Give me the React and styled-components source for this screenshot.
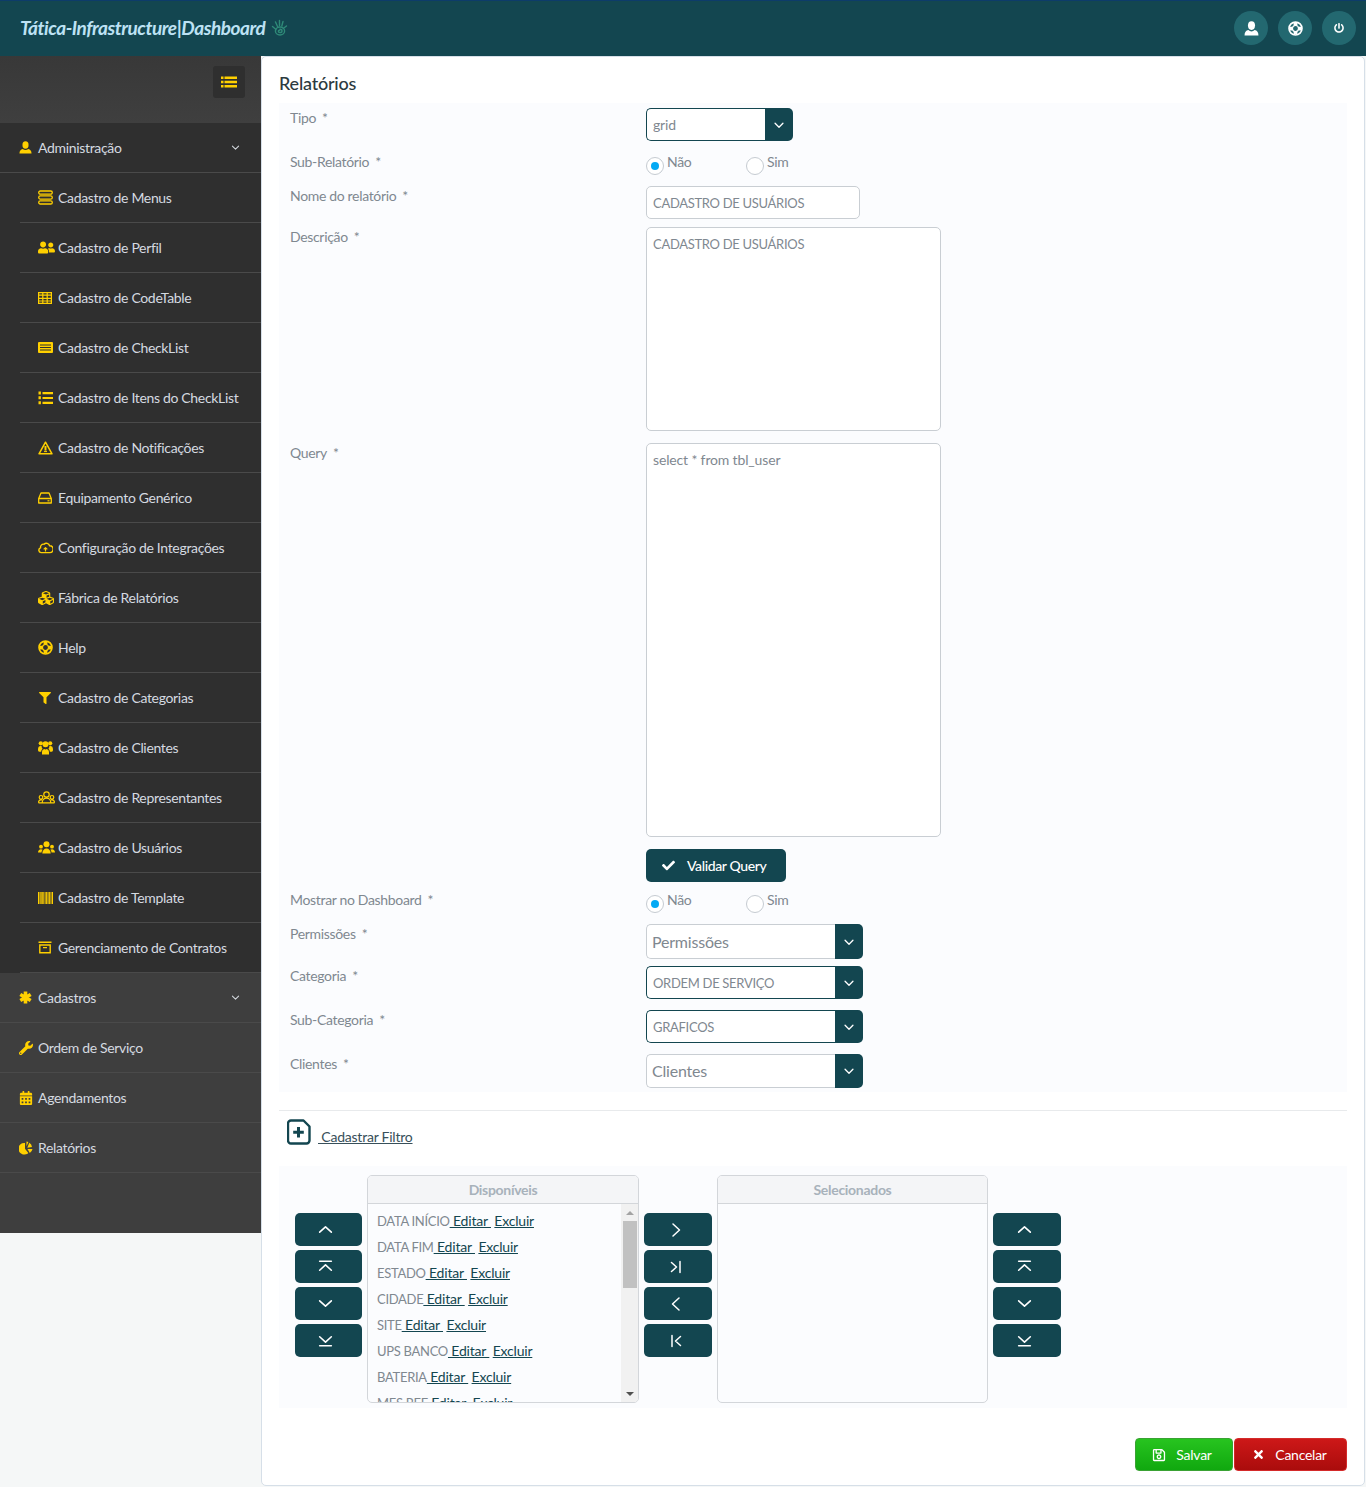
import React from 'react';
import styled, { createGlobalStyle } from 'styled-components';
import { FaUserFriends, FaCubes, FaFilter, FaWrench, FaCalendarAlt, FaPowerOff, FaCheck, FaTimes, FaRegSave } from 'react-icons/fa';

const TEAL = '#134650';
const FONT = '"Lato", "Liberation Sans", sans-serif';

const GlobalStyle = createGlobalStyle`
  html, body { margin: 0; padding: 0; background: #f5f7f7; }
  * { box-sizing: border-box; }
  body { font-family: ${FONT}; font-size: 14px; color: #7a858f; }
`;

const Page = styled.div`
  width: 1366px;
  height: 1487px;
  display: flex;
  flex-direction: column;
`;

const Header = styled.header`
  height: 56px;
  flex: none;
  background: ${TEAL};
  border-top: 1px solid #0d3c6a;
  display: flex;
  align-items: center;
  justify-content: space-between;
  padding: 0 10px 1px 20px;
`;

const Brand = styled.div`
  display: flex;
  align-items: center;
  gap: 6px;
  margin-top: -1px;
  color: #bde2f4;
  font-size: 19px;
  font-weight: 700;
  font-style: italic;
  letter-spacing: -0.45px;
`;

const HeaderActions = styled.div`
  display: flex;
  gap: 10px;
`;

const RoundButton = styled.button`
  width: 34px;
  height: 34px;
  border: 0;
  padding: 0;
  border-radius: 50%;
  background: #236870;
  color: #fff;
  display: flex;
  align-items: center;
  justify-content: center;
`;

const Body = styled.div`
  flex: 1;
  display: flex;
  align-items: stretch;
`;

const Sidebar = styled.aside`
  width: 261px;
  height: 1177px;
  flex: none;
  background: #3e3e3e;
`;

const ToggleBar = styled.div`
  height: 67px;
  padding: 10px 16px 0 0;
  display: flex;
  justify-content: flex-end;
  align-items: flex-start;
  background: linear-gradient(#383838, #3f3f3f);
`;

const ToggleButton = styled.button`
  width: 32px;
  height: 32px;
  padding: 0;
  border: 0;
  border-radius: 3px;
  background: #2f2f2f;
  color: #ffd000;
  display: flex;
  align-items: center;
  justify-content: center;
`;

const SubMenu = styled.div`
  background: #2f2f2f;
`;

const MenuRow = styled.div`
  height: 50px;
  display: flex;
  align-items: center;
  color: #d5dae0;
  font-size: 14px;
  letter-spacing: -0.33px;
  border-bottom: 1px solid #4a4a4a;
  padding: ${({ $sub }) => ($sub ? '0 0 0 18px' : '0 20px 0 19px')};
  margin-left: ${({ $sub }) => ($sub ? '20px' : '0')};
`;

const MenuIcon = styled.span`
  width: ${({ $sub }) => ($sub ? '20px' : '19px')};
  flex: none;
  color: #ffd000;
  display: flex;
  align-items: center;
`;

const MenuLabel = styled.span`
  flex: 1;
  white-space: nowrap;
`;

const Main = styled.main`
  flex: 1;
  margin-bottom: 1px;
  margin-right: 1px;
  background: #fff;
  border: 1px solid #d6dfe8;
  border-radius: 5px;
  padding: 16px 17px 0 17px;
  display: flex;
  flex-direction: column;
`;

const Title = styled.h1`
  margin: 0;
  height: 30px;
  line-height: 20px;
  font-size: 18px;
  font-weight: 500;
  letter-spacing: -0.2px;
  color: #2c3a40;
`;

const FormPanel = styled.section`
  background: #fbfcfe;
  padding: 5px 0 4px 0;
`;

const Row = styled.div`
  display: grid;
  grid-template-columns: 367px 1fr;
  margin-top: ${({ $top }) => $top || 0}px;
`;

const Label = styled.label`
  padding-left: 11px;
  line-height: 20px;
  font-size: 14px;
  letter-spacing: -0.33px;
  color: #7f8890;
  &::after {
    content: '*';
    margin-left: 6px;
  }
`;

const SelectBox = styled.div`
  width: ${({ $width }) => $width}px;
  height: ${({ $height }) => $height || 33}px;
  display: flex;
`;

const SelectValue = styled.span`
  flex: 1;
  padding: 0 0 ${({ $large }) => ($large ? 1 : 0)}px ${({ $large }) => ($large ? 5 : 6)}px;
  background: #fff;
  border: 1px solid ${({ $active }) => ($active ? TEAL : '#c9ced3')};
  border-right: 0;
  border-radius: 5px 0 0 5px;
  display: flex;
  align-items: center;
  font-size: ${({ $large }) => ($large ? 16 : 14)}px;
  letter-spacing: -0.2px;
  color: #7f8890;
`;

const SelectArrow = styled.span`
  width: 28px;
  background: ${TEAL};
  border-radius: 0 5px 5px 0;
  color: #fff;
  display: flex;
  align-items: center;
  justify-content: center;
`;

const Caps = styled.span`
  font-size: 13px;
  letter-spacing: -0.3px;
`;

const TextInput = styled.input`
  display: block;
  width: 214px;
  height: 33px;
  border: 1px solid #c9ced3;
  border-radius: 5px;
  background: #fff;
  padding: 0 6px;
  font-family: ${FONT};
  font-size: 13px;
  letter-spacing: -0.3px;
  color: #7f8890;
  outline: none;
`;

const TextArea = styled.textarea`
  display: block;
  width: 295px;
  height: ${({ $height }) => $height}px;
  border: 1px solid #c9ced3;
  border-radius: 5px;
  background: #fff;
  padding: ${({ $caps }) => ($caps ? 8 : 7)}px 6px;
  font-family: ${FONT};
  font-size: ${({ $caps }) => ($caps ? 13 : 14)}px;
  letter-spacing: ${({ $caps }) => ($caps ? -0.3 : -0.15)}px;
  color: #7f8890;
  resize: none;
  outline: none;
`;

const RadioGroup = styled.div`
  display: flex;
  height: 24px;
  padding-top: 4px;
`;

const RadioOption = styled.span`
  width: 100px;
  display: flex;
  align-items: flex-start;
  gap: 3px;
  line-height: 12px;
  font-size: 14px;
  letter-spacing: -0.35px;
  color: #7f8890;
`;

const RadioDot = styled.span`
  width: 18px;
  height: 18px;
  margin-top: 1px;
  border: 1px solid #c5cbd1;
  border-radius: 50%;
  background: #fff;
  display: flex;
  align-items: center;
  justify-content: center;
  &::after {
    content: '';
    width: 8px;
    height: 8px;
    border-radius: 50%;
    background: ${({ $on }) => ($on ? '#03a9f4' : 'transparent')};
  }
`;

const SolidButton = styled.button`
  width: 140px;
  height: 33px;
  border: 0;
  border-radius: 5px;
  background: ${TEAL};
  color: #fff;
  font-family: ${FONT};
  font-size: 14px;
  font-weight: 500;
  letter-spacing: -0.38px;
  display: flex;
  align-items: center;
  gap: 12px;
  padding: 0 0 0 16px;
`;

const Divider = styled.hr`
  margin: 18px 0 0;
  border: 0;
  border-top: 1px solid #e8eaec;
`;

const FilterLink = styled.div`
  height: 55px;
  padding: 8px 0 0 8px;
  display: flex;
  align-items: flex-start;
  gap: 7px;
  color: ${TEAL};
`;

const FilterText = styled.a`
  margin-top: 10px;
  line-height: 16px;
  font-size: 14px;
  letter-spacing: -0.23px;
  color: #38505a;
  text-decoration: underline;
  white-space: pre;
`;

const ListPanel = styled.section`
  height: 242px;
  background: #fbfcfe;
  padding: 9px 0 0 16px;
  display: flex;
  align-items: flex-start;
`;

const MoveColumn = styled.div`
  width: ${({ $width }) => $width}px;
  margin-top: 38px;
  margin-left: ${({ $left }) => $left || 0}px;
  display: flex;
  flex-direction: column;
  gap: 4px;
`;

const MoveButton = styled.button`
  height: 33px;
  padding: 0 ${({ $wide }) => ($wide ? 5 : 6)}px 0 0;
  border: 0;
  border-radius: 5px;
  background: ${TEAL};
  color: #fff;
  display: flex;
  align-items: center;
  justify-content: center;
`;

const ListBox = styled.div`
  width: ${({ $width }) => $width}px;
  height: 228px;
  margin-left: 5px;
  border: 1px solid #d3d6da;
  border-radius: 5px;
  overflow: hidden;
  display: flex;
  flex-direction: column;
`;

const ListHeader = styled.div`
  height: 28px;
  flex: none;
  background: #f4f5f7;
  border-bottom: 1px solid #d3d6da;
  text-align: center;
  line-height: 27px;
  font-size: 14px;
  font-weight: 700;
  letter-spacing: -0.3px;
  color: #a8b2bb;
`;

const ListBody = styled.div`
  flex: 1;
  min-height: 0;
  display: flex;
`;

const ListItems = styled.ul`
  flex: 1;
  margin: 0;
  padding: 4px 0 0 9px;
  list-style: none;
  overflow: hidden;
`;

const ListItem = styled.li`
  height: 26px;
  line-height: 26px;
  font-size: 14px;
  letter-spacing: -0.2px;
  color: #7f8890;
  white-space: pre;
`;

const ItemLink = styled.a`
  color: ${TEAL};
  text-decoration: underline;
`;

const ScrollTrack = styled.div`
  width: 17px;
  flex: none;
  background: #f1f1f1;
  display: flex;
  flex-direction: column;
  align-items: center;
`;

const ScrollArrow = styled.span`
  height: 17px;
  flex: none;
  display: flex;
  align-items: center;
  justify-content: center;
  margin-top: ${({ $end }) => ($end ? 'auto' : '0')};
  &::after {
    content: '';
    border-left: 4px solid transparent;
    border-right: 4px solid transparent;
    border-${({ $end }) => ($end ? 'top' : 'bottom')}: 4px solid ${({ $end }) => ($end ? '#505050' : '#a3a3a3')};
  }
`;

const ScrollThumb = styled.div`
  width: 14px;
  height: 67px;
  background: #c1c1c1;
`;

const Footer = styled.div`
  flex: 1;
  display: flex;
  justify-content: flex-end;
  align-items: flex-start;
  padding-top: 30px;
  gap: 1px;
`;

const ActionButton = styled.button`
  height: 33px;
  width: ${({ $width }) => $width}px;
  border-radius: 4px;
  border: 1px solid ${({ $danger }) => ($danger ? '#d42a2a' : '#3aa234')};
  background: ${({ $danger }) => ($danger ? 'linear-gradient(#cd1818, #aa0c0c)' : 'linear-gradient(#27c41f, #10a80f)')};
  color: #fff;
  font-family: ${FONT};
  font-size: 14px;
  letter-spacing: -0.25px;
  display: flex;
  align-items: center;
  justify-content: center;
  gap: 10px;
  padding: 0 ${({ $danger }) => ($danger ? 2 : 4)}px 0 0;
`;

const Glyph = ({ d, size = 14, width = 1.5 }) => (
  <svg width={size} height={size} viewBox="0 0 16 16" fill="none" stroke="currentColor" strokeWidth={width} strokeLinecap="round" strokeLinejoin="round">
    <path d={d} />
  </svg>
);

const CHEVRON_DOWN = 'M3.5 6l4.5 4.5L12.5 6';
const MOVE = {
  up: 'M2.5 10.5L8 5.5l5.5 5',
  top: 'M2.5 3h11M2.5 11.5L8 6.5l5.5 5',
  down: 'M2.5 5.5L8 10.5l5.5-5',
  bottom: 'M2.5 4.5L8 9.5l5.5-5M2.5 13h11',
  right: 'M5 2l6.5 6L5 14',
  last: 'M3.5 3.5L8.5 8l-5 4.5M12 2.5v11',
  left: 'M11 2L4.5 8l6.5 6',
  first: 'M12.5 3.5L7.5 8l5 4.5M4 2.5v11',
};

const BustIcon = ({ size = 14 }) => (
  <svg width={size} height={size} viewBox="0 0 14 14" fill="currentColor">
    <ellipse cx="7" cy="4.3" rx="3.3" ry="4" />
    <path d="M.5 13.5c0-3 1.3-4.6 3.6-5 .8.8 1.8 1.2 2.9 1.2s2.100-.4 2.900-1.200c2.300.4 3.600 2 3.600 5z" />
  </svg>
);

const RingIcon = ({ size = 15 }) => (
  <svg width={size} height={size} viewBox="0 0 16 16" fill="none" stroke="currentColor">
    <circle cx="8" cy="8" r="6.9" strokeWidth="1.8" />
    <circle cx="8" cy="8" r="3.2" strokeWidth="1.3" />
    <path d="M8 1.500v3.500M8 11v3.500M1.500 8H5M11 8h3.500" strokeWidth="4" />
  </svg>
);

const BarsIcon = () => (
  <svg width="16" height="12" viewBox="0 0 16 12" fill="currentColor">
    <path d="M0 .5h2.500v2.600H0zM3.500 .5H16v2.600H3.500zM0 4.700h2.500v2.600H0zM3.500 4.700H16v2.600H3.500zM0 8.900h2.500v2.600H0zM3.500 8.900H16v2.600H3.500z" />
  </svg>
);

const PillsIcon = () => (
  <svg width="15" height="15" viewBox="0 0 15 15" fill="none" stroke="currentColor" strokeWidth="1.3">
    <rect x="0.7" y="1" width="13.6" height="3.2" rx="1.6" />
    <rect x="0.7" y="5.900" width="13.6" height="3.2" rx="1.6" />
    <rect x="0.7" y="10.800" width="13.6" height="3.2" rx="1.6" />
  </svg>
);

const GridIcon = () => (
  <svg width="14" height="12" viewBox="0 0 14 12" fill="none" stroke="currentColor" strokeWidth="1.2">
    <path d="M.6.6h12.800v10.800H.6zM.6 3.100h12.800M.6 6.300h12.800M.6 9h12.800M4.800.6v10.800M9.200.6v10.800" />
  </svg>
);

const SheetIcon = () => (
  <svg width="15" height="11" viewBox="0 0 15 11">
    <rect width="15" height="11" rx="1" fill="currentColor" />
    <path d="M2 3h11M2 5.500h11M2 8h11" stroke="#2f2f2f" strokeWidth="1" />
  </svg>
);

const NumberedIcon = () => (
  <svg width="15" height="14" viewBox="0 0 15 14" fill="currentColor">
    <path d="M4.500 1h10.500v2.200H4.500zM4.500 5.900h10.500v2.200H4.500zM4.500 10.800h10.500V13H4.500zM.5 .5h2.400v3H.5zM.5 5.300h2.400v3H.5zM.5 10.200h2.400v3H.5z" />
  </svg>
);

const WarningIcon = () => (
  <svg width="15" height="14" viewBox="0 0 15 14" fill="none" stroke="currentColor" strokeWidth="1.5" strokeLinejoin="round">
    <path d="M7.500 1.200L14 12.800H1z" />
    <path d="M7.500 5v4.600" strokeWidth="2" />
    <path d="M6 10.600h3" strokeWidth="1" />
  </svg>
);

const DriveIcon = () => (
  <svg width="14" height="12" viewBox="0 0 14 12" fill="none" stroke="currentColor" strokeWidth="1.3" strokeLinejoin="round">
    <path d="M3 1h8l2.300 5.500V11H.7V6.500zM.7 6.500h12.600" />
    <path d="M9.500 8.800h2" strokeWidth="1.200" />
  </svg>
);

const CloudIcon = () => (
  <svg width="15" height="13" viewBox="0 0 15 13" fill="none" stroke="currentColor" strokeWidth="1.400" strokeLinejoin="round">
    <path d="M4 11.600H3a2.400 2.400 0 0 1-.4-4.700A3 3 0 0 1 6 3.200a3.400 3.400 0 0 1 5.600 1.600 3.400 3.400 0 0 1 .2 6.800H4z" />
    <path d="M7.500 10.500V7M5.700 8.400l1.800-1.800 1.800 1.800" strokeWidth="1.200" />
  </svg>
);

const TrioFilledIcon = () => (
  <svg width="15" height="15" viewBox="0 0 15 15" fill="currentColor">
    <circle cx="2.800" cy="3.300" r="2.100" />
    <circle cx="12.200" cy="3.300" r="2.100" />
    <circle cx="7.500" cy="4.200" r="3" />
    <path d="M0 9.500c0-2.300 1-3.400 2.700-3.400.3 0 .8.100 1.100.3-.2 1 .3 1.900 1 2.400-1 .6-1.600 1.700-1.600 3H1.300C.5 11.800 0 10.800 0 9.500zM15 9.500c0-2.300-1-3.400-2.700-3.400-.3 0-.8.100-1.100.3.200 1-.3 1.900-1 2.400 1 .6 1.600 1.700 1.600 3h1.900c.8 0 1.300-1 1.300-2.300z" />
    <path d="M4 14.600v-2.300c0-1.800 1-3 2.200-3.300.8.500 1.800.5 2.600 0 1.200.3 2.200 1.500 2.200 3.300v2.300z" />
  </svg>
);

const PEOPLE_D = 'M8.500.8a2.700 2.700 0 1 1 0 5.400 2.700 2.700 0 0 1 0-5.400zM4.200 11.800c0-3 1.800-4.600 4.300-4.600s4.300 1.600 4.300 4.600zM3 4.500a1.800 1.800 0 1 1 0 3.600 1.800 1.800 0 0 1 0-3.600zM.5 11.800c0-1.900.8-3 2.500-3 .4 0 .8.100 1.100.2M14 4.500a1.800 1.800 0 1 1 0 3.600 1.800 1.800 0 0 1 0-3.600zM16.500 11.800c0-1.900-.8-3-2.500-3-.4 0-.8.100-1.100.2M.5 11.800h3.700M12.800 11.800h3.700';

const PeopleOutlineIcon = () => (
  <svg width="17" height="13" viewBox="0 0 17 13" fill="none" stroke="currentColor" strokeWidth="1.200" strokeLinejoin="round">
    <path d={PEOPLE_D} />
  </svg>
);

const PeopleSolidIcon = () => (
  <svg width="17" height="13" viewBox="0 0 17 13" fill="currentColor">
    <circle cx="8.500" cy="3.200" r="3" />
    <circle cx="3" cy="5.700" r="1.900" />
    <circle cx="14" cy="5.700" r="1.900" />
    <path d="M0 11.500c0-2 1.200-3.300 3-3.300.7 0 1.300.2 1.700.5C3.900 9.500 3.500 10.400 3.500 11.500zM17 11.500c0-2-1.200-3.300-3-3.300-.7 0-1.300.2-1.700.5.800.8 1.200 1.700 1.200 2.800z" />
    <path d="M4.300 12.500c0-3 1.800-5 4.200-5s4.200 2 4.200 5z" />
  </svg>
);

const BarcodeIcon = () => (
  <svg width="15" height="12" viewBox="0 0 15 12" fill="currentColor">
    <path d="M0 0h1.500v12H0zM2 0h.7v12H2zM3.300 0h1.500v12H3.300zM5.300 0h.7v12h-.7zM6.600 0h1v12h-1zM8.100 0h1.300v12H8.100zM9.900 0h.7v12h-.7zM11.100 0h1.200v12h-1.200zM12.800 0h.7v12h-.7zM14 0h1v12h-1z" />
  </svg>
);

const ArchiveIcon = () => (
  <svg width="14" height="13" viewBox="0 0 14 13" fill="none" stroke="currentColor" strokeWidth="1.400">
    <path d="M.5 1.200h13M1.800 4h10.400v7.800H1.800zM5 6.600h4" />
  </svg>
);

const AsteriskIcon = () => (
  <svg width="13" height="13" viewBox="0 0 13 13" fill="none" stroke="currentColor" strokeWidth="3.600">
    <path d="M6.500.5v12M1.300 3.500l10.400 6M1.300 9.500l10.400-6" />
  </svg>
);

const PieIcon = () => (
  <svg width="14" height="14" viewBox="0 0 14 14" fill="currentColor">
    <path d="M6 2v5.700l3.300 4.200A5.800 5.800 0 1 1 6 2zM7.500 .5a5.500 5.500 0 0 1 1.900 .6L7.500 5.200zM10.300 1.700a5.700 5.700 0 0 1 2.700 4.300L8.300 6.700zM8.500 8H13.500a6 6 0 0 1-2.700 3.900z" />
  </svg>
);

const HandIcon = () => (
  <svg width="18" height="18" viewBox="0 0 18 18" fill="none" stroke="#2f8a78" strokeWidth="1.400" strokeLinecap="round">
    <path d="M1.500 7.500L5 10.500M4.500 3L6.500 7.500M8.500 1.500V6.500M12 2.500L10.800 7M15.500 7l-3.300 2.500" />
    <ellipse cx="9" cy="12" rx="4.600" ry="4" />
    <path d="M9 10.200c1.200 0 2 .7 2 1.700s-.9 1.600-2 1.600-1.700-.5-1.700-1.200.6-1 1.300-1" />
  </svg>
);

const FileIcon = () => (
  <svg width="24" height="26" viewBox="0 0 24 26" fill="none" stroke="currentColor" strokeWidth="2.400" strokeLinejoin="round">
    <path d="M4 1.500h12.500l6 6V21.500a3 3 0 0 1-3 3H4a3 3 0 0 1-3-3V4.500a3 3 0 0 1 3-3z" />
    <path d="M11.500 8v10.500M6.200 13.200h10.600" strokeWidth="3" />
  </svg>
);

const adminItems = [
  [<PillsIcon />, 'Cadastro de Menus'],
  [<FaUserFriends size={17} />, 'Cadastro de Perfil'],
  [<GridIcon />, 'Cadastro de CodeTable'],
  [<SheetIcon />, 'Cadastro de CheckList'],
  [<NumberedIcon />, 'Cadastro de Itens do CheckList'],
  [<WarningIcon />, 'Cadastro de Notificações'],
  [<DriveIcon />, 'Equipamento Genérico'],
  [<CloudIcon />, 'Configuração de Integrações'],
  [<FaCubes size={16} />, 'Fábrica de Relatórios'],
  [<RingIcon />, 'Help'],
  [<FaFilter size={12} style={{ marginLeft: 1 }} />, 'Cadastro de Categorias'],
  [<TrioFilledIcon />, 'Cadastro de Clientes'],
  [<PeopleOutlineIcon />, 'Cadastro de Representantes'],
  [<PeopleSolidIcon />, 'Cadastro de Usuários'],
  [<BarcodeIcon />, 'Cadastro de Template'],
  [<ArchiveIcon />, 'Gerenciamento de Contratos'],
];

const filters = ['DATA INÍCIO', 'DATA FIM', 'ESTADO', 'CIDADE', 'SITE', 'UPS BANCO', 'BATERIA', 'MES REF'];

const MoveButtons = ({ names, left, width = 68 }) => (
  <MoveColumn $left={left} $width={width}>
    {names.map((name) => (
      <MoveButton key={name} $wide={name === 'right' || name === 'left' || name === 'last' || name === 'first'}>
        <Glyph d={MOVE[name]} size={name === 'right' || name === 'left' || name === 'last' || name === 'first' ? 16 : 17} />
      </MoveButton>
    ))}
  </MoveColumn>
);

const Select = ({ width, height, active, large, children }) => (
  <SelectBox $width={width} $height={height}>
    <SelectValue $large={large} $active={active}>{children}</SelectValue>
    <SelectArrow><Glyph d={CHEVRON_DOWN} size={14} /></SelectArrow>
  </SelectBox>
);

const Radios = () => (
  <RadioGroup>
    <RadioOption><RadioDot $on />Não</RadioOption>
    <RadioOption><RadioDot />Sim</RadioOption>
  </RadioGroup>
);

export default function App() {
  return (
    <Page>
      <GlobalStyle />
      <Header>
        <Brand>Tática-Infrastructure|Dashboard <HandIcon /></Brand>
        <HeaderActions>
          <RoundButton><BustIcon size={15} /></RoundButton>
          <RoundButton><RingIcon size={15} /></RoundButton>
          <RoundButton><FaPowerOff size={10} /></RoundButton>
        </HeaderActions>
      </Header>
      <Body>
        <Sidebar>
          <ToggleBar>
            <ToggleButton><BarsIcon /></ToggleButton>
          </ToggleBar>
          <SubMenu>
            <MenuRow>
              <MenuIcon><BustIcon size={13} /></MenuIcon>
              <MenuLabel>Administração</MenuLabel>
              <Glyph d={CHEVRON_DOWN} size={11} />
            </MenuRow>
            {adminItems.map(([icon, label]) => (
              <MenuRow $sub key={label}>
                <MenuIcon $sub>{icon}</MenuIcon>
                <MenuLabel>{label}</MenuLabel>
              </MenuRow>
            ))}
          </SubMenu>
          <MenuRow>
            <MenuIcon><AsteriskIcon /></MenuIcon>
            <MenuLabel>Cadastros</MenuLabel>
            <Glyph d={CHEVRON_DOWN} size={11} />
          </MenuRow>
          <MenuRow>
            <MenuIcon><FaWrench size={14} /></MenuIcon>
            <MenuLabel>Ordem de Serviço</MenuLabel>
          </MenuRow>
          <MenuRow>
            <MenuIcon><FaCalendarAlt size={14} /></MenuIcon>
            <MenuLabel>Agendamentos</MenuLabel>
          </MenuRow>
          <MenuRow>
            <MenuIcon><PieIcon /></MenuIcon>
            <MenuLabel>Relatórios</MenuLabel>
          </MenuRow>
        </Sidebar>
        <Main>
          <Title>Relatórios</Title>
          <FormPanel>
            <Row>
              <Label>Tipo</Label>
              <Select width={147} active>grid</Select>
            </Row>
            <Row $top={11}>
              <Label>Sub-Relatório</Label>
              <Radios />
            </Row>
            <Row $top={10}>
              <Label>Nome do relatório</Label>
              <TextInput readOnly value="CADASTRO DE USUÁRIOS" />
            </Row>
            <Row $top={8}>
              <Label>Descrição</Label>
              <TextArea $height={204} $caps readOnly value="CADASTRO DE USUÁRIOS" />
            </Row>
            <Row $top={12}>
              <Label>Query</Label>
              <TextArea $height={394} readOnly value="select * from tbl_user" />
            </Row>
            <Row $top={12}>
              <span />
              <SolidButton><FaCheck size={13} />Validar Query</SolidButton>
            </Row>
            <Row $top={8}>
              <Label>Mostrar no Dashboard</Label>
              <Radios />
            </Row>
            <Row $top={10}>
              <Label>Permissões</Label>
              <Select width={217} height={35} large>Permissões</Select>
            </Row>
            <Row $top={7}>
              <Label>Categoria</Label>
              <Select width={217} active><Caps>ORDEM DE SERVIÇO</Caps></Select>
            </Row>
            <Row $top={11}>
              <Label>Sub-Categoria</Label>
              <Select width={217} active><Caps>GRAFICOS</Caps></Select>
            </Row>
            <Row $top={11}>
              <Label>Clientes</Label>
              <Select width={217} height={34} large>Clientes</Select>
            </Row>
          </FormPanel>
          <Divider />
          <FilterLink>
            <FileIcon />
            <FilterText> Cadastrar Filtro</FilterText>
          </FilterLink>
          <ListPanel>
            <MoveButtons names={['up', 'top', 'down', 'bottom']} width={67} />
            <ListBox $width={272}>
              <ListHeader>Disponíveis</ListHeader>
              <ListBody>
                <ListItems>
                  {filters.map((name) => (
                    <ListItem key={name}>
                      <Caps>{name}</Caps><ItemLink> Editar </ItemLink> <ItemLink>Excluir</ItemLink>
                    </ListItem>
                  ))}
                </ListItems>
                <ScrollTrack>
                  <ScrollArrow />
                  <ScrollThumb />
                  <ScrollArrow $end />
                </ScrollTrack>
              </ListBody>
            </ListBox>
            <MoveButtons names={['right', 'last', 'left', 'first']} left={5} />
            <ListBox $width={271}>
              <ListHeader>Selecionados</ListHeader>
            </ListBox>
            <MoveButtons names={['up', 'top', 'down', 'bottom']} left={5} />
          </ListPanel>
          <Footer>
            <ActionButton $width={98}><FaRegSave size={14} />Salvar</ActionButton>
            <ActionButton $width={113} $danger><FaTimes size={13} />Cancelar</ActionButton>
          </Footer>
        </Main>
      </Body>
    </Page>
  );
}
